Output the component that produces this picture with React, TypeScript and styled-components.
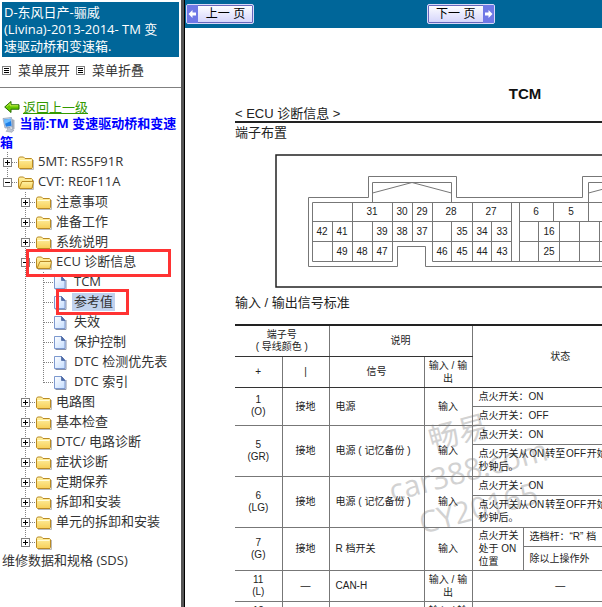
import React from "react";
import styled, { createGlobalStyle, css } from "styled-components";

const blue = "#006699";
const uiFont = `"Open Sans", "Noto Sans CJK SC", sans-serif`;
const docFont = `"Liberation Sans", "Noto Sans CJK SC", sans-serif`;

const GlobalStyle = createGlobalStyle`
  *, *::before, *::after { box-sizing: border-box; }
  body { margin: 0; background: #fff; overflow: hidden; }
  a { color: inherit; text-decoration: none; }
  button { font: inherit; color: inherit; cursor: pointer; }
`;

const Page = styled.div`
  display: grid;
  grid-template-columns: 185px minmax(0, 1fr);
  height: 100vh;
`;

/* ---------- sidebar ---------- */

const Sidebar = styled.nav`
  overflow: hidden;
  border-right: 1px solid #000;
  box-shadow: inset -3px 0 0 #555;
  padding-right: 3px;
  color: #333;
  font: 13px/20px ${uiFont};
`;

const ManualTitle = styled.h1`
  margin: 2px;
  padding: 2px 12px 2px 2px;
  background: ${blue};
  color: #fff;
  font: 13px/17px ${uiFont};
`;

const MenuActions = styled.div`
  display: flex;
  gap: 6px;
  padding: 1px 2px 7px;
  border-bottom: 1px solid #808080;
`;

const MenuAction = styled.button`
  display: flex;
  align-items: center;
  gap: 7px;
  padding: 0;
  border: 0;
  background: none;
  white-space: nowrap;
`;

const Location = styled.div`
  padding-top: 11px;
`;

const BackLink = styled.a`
  display: flex;
  align-items: center;
  gap: 3px;
  height: 15px;
  padding-left: 4px;
  color: #339900;
  span { text-decoration: underline; }
`;

const Current = styled.p`
  margin: 0;
  color: #0000ff;
  font-weight: bold;
  line-height: 19px;
  svg { vertical-align: middle; margin: 0 0 0 2px; }
`;

const Tree = styled.ul`
  margin: 0;
  padding: 0;
  list-style: none;
`;

const TreeRow = styled.li`
  position: relative;
  display: flex;
  height: 20px;
  white-space: nowrap;
`;

const Spacer = styled.span`
  flex: 0 0 18px;
`;

const Toggle = styled.button`
  flex: 0 0 18px;
  height: 20px;
  padding: 0;
  border: 0;
  background: none;
  svg { display: block; }
`;

const Item = styled.a<{ $selected?: boolean }>`
  display: flex;
  svg { flex: none; }
  span {
    height: 18px;
    margin-top: 1px;
    padding: 0 2px;
    line-height: 17px;
    ${(p) => p.$selected && css`background: #c1d2ee;`}
  }
`;

const Callout = styled.i<{ $left: number; $width: number; $height: number }>`
  position: absolute;
  z-index: 1;
  top: -3px;
  left: ${(p) => p.$left}px;
  width: ${(p) => p.$width}px;
  height: ${(p) => p.$height}px;
  border: 3px solid #ff3333;
  pointer-events: none;
`;

const LastLink = styled.a`
  display: block;
  padding-left: 2px;
  line-height: 16px;
`;

/* ---------- main ---------- */

const Main = styled.main`
  overflow: hidden;
  background: #fff;
`;

const PagerBar = styled.div`
  display: grid;
  grid-template-columns: 58% auto;
  justify-items: start;
  height: 28px;
  padding: 4px 0 0 1px;
  background: ${blue};
`;

const PagerButton = styled.button<{ $next?: boolean }>`
  display: flex;
  flex-direction: ${(p) => (p.$next ? "row-reverse" : "row")};
  width: 68px;
  height: 20px;
  padding: 0;
  overflow: hidden;
  border: 1px solid #d8d8f8;
  border-radius: 2px;
  box-shadow: inset 0 0 0 1px #6666bb;
  background: linear-gradient(#fff, #d3d3fb);
  color: #000;
  font: 12px/18px ${docFont};
  svg { flex: none; }
  span { flex: 1; white-space: nowrap; text-align: center; }
`;

const Sheet = styled.article`
  position: relative;
  width: 580px;
  margin: 56px 0 0 50px;
  color: #222;
  font: 10px/12px ${docFont};
`;

const SheetTitle = styled.h2`
  margin: 0;
  color: #111;
  text-align: center;
  font-size: 15px;
  line-height: 20px;
`;

const SectionTitle = styled.h3`
  margin: 0;
  padding-top: 2px;
  border-bottom: 2px solid #222;
  font: 13px/15px ${docFont};
`;

const SubTitle = styled.h4`
  margin: 0 0 11px;
  font: 13px/20px ${docFont};
`;

const Diagram = styled.svg`
  display: block;
  margin: 0 0 5px 40px;
  fill: none;
  stroke: #777;
  text {
    fill: #222;
    stroke: none;
    font: 10px ${docFont};
    text-anchor: middle;
  }
`;

const Signals = styled.table`
  position: relative;
  width: 413px;
  table-layout: fixed;
  border-collapse: collapse;
  border-top: 2px solid #222;
  line-height: 13px;
`;

const Col = styled.col<{ $w: number }>`
  width: ${(p) => p.$w}px;
`;

const Row = styled.tr<{ $h: number }>`
  height: ${(p) => p.$h}px;
`;

const cell = css<{ $left?: boolean }>`
  padding: 0 0 0 ${(p) => (p.$left ? 6 : 0)}px;
  border: 1px solid #777;
  text-align: ${(p) => (p.$left ? "left" : "center")};
  vertical-align: middle;
  font-weight: normal;
  white-space: nowrap;
  &:last-child { border-right: 0; }
`;

const Td = styled.td<{ $left?: boolean }>`${cell}`;
const Th = styled.th<{ $left?: boolean }>`
  ${cell}
  border-bottom-color: #333;
`;
const PinTd = styled(Td)`
  border-left: 0;
  line-height: 12px;
`;
const PinTh = styled(Th)`
  border-left: 0;
  line-height: 12px;
`;

const Watermark = styled.div`
  position: absolute;
  left: 133px;
  top: 327px;
  width: 200px;
  color: #d2d2d2;
  font: 30px/39px ${uiFont};
  text-align: center;
  transform: rotate(-15deg);
  pointer-events: none;
`;

/* ---------- icons ---------- */

const ListIcon = () => (
  <svg width="9" height="9" viewBox="0 0 9 9" aria-hidden="true">
    <rect x=".5" y=".5" width="8" height="8" fill="#fff" stroke="#808080" />
    <path d="M2 2.5h5M2 4.5h5M2 6.5h5" stroke="#000" />
  </svg>
);

const BackIcon = () => (
  <svg width="16" height="14" viewBox="0 0 16 14" aria-hidden="true">
    <path d="M.7 7 7 1.5v3.3h8v4.4H7v3.3z" fill="#66c800" stroke="#246b00" />
    <path d="M2.5 6.7 6.2 3.5v2.3h8" fill="none" stroke="#c8f04c" />
  </svg>
);

const ComputerIcon = () => (
  <svg width="14" height="16" viewBox="0 0 14 16" aria-hidden="true">
    <path d="M10 2l2.5 1v9l-3 1z" fill="#a8b0bc" />
    <path d="M1 1.5 9.5.5l1.2 9L3 11z" fill="#cfd8e6" stroke="#8292ae" strokeWidth=".7" />
    <path d="m2 2.5 6.8-.8.9 7L3.8 9.8z" fill="#1d7fe8" />
    <path d="m2 2.5 6.8-.8.3 2.2L2.6 7z" fill="#6bbcff" />
    <path d="m5 11 3-.6.5 2L12 13l-2 2.3-6-1 1.5-1.5z" fill="#bdc6d4" stroke="#8791a3" strokeWidth=".5" />
  </svg>
);

const FolderIcon = ({ open }: { open?: boolean }) => (
  <svg width="18" height="20" viewBox="0 0 18 20" aria-hidden="true">
    <defs>
      <linearGradient id="folder" x1="0" y1="0" x2="0" y2="1">
        <stop offset="0" stopColor="#fff3a8" />
        <stop offset="1" stopColor="#f7cf58" />
      </linearGradient>
    </defs>
    <path d="M2 17.5h13.5V8" fill="none" stroke="#bbb" />
    <path d="M.5 15.500V6.500l1-1.500h4l1.500 1.500h6.500l1 1v8l-.5 1h-12.500z" fill="url(#folder)" stroke="#b98a24" />
    {open ? (
      <path d="M1 16.500 4 9.500h11.500l-1.500 7z" fill="url(#folder)" stroke="#b98a24" />
    ) : (
      <path d="M1.500 8.500h12" stroke="#fffbd8" />
    )}
  </svg>
);

const PageIcon = () => (
  <svg width="18" height="20" viewBox="0 0 18 20" aria-hidden="true">
    <defs>
      <linearGradient id="sheet" x1="0" y1="0" x2="1" y2="1">
        <stop offset="0" stopColor="#fff" />
        <stop offset="1" stopColor="#c3dcff" />
      </linearGradient>
    </defs>
    <path d="M1.500 17.500h10.500V8" fill="none" stroke="#8b93a8" />
    <path d="M.5 4.500h7l3.500 4v8H.5z" fill="url(#sheet)" stroke="#7c98cf" />
    <path d="M7.500 4.500v4H11z" fill="#4d6dae" stroke="#3d5794" strokeWidth=".6" />
  </svg>
);

type Line = "through" | "down" | "up";

const Branch = ({ line, sign }: { line: Line; sign?: "+" | "-" }) => (
  <svg width="18" height="20" viewBox="0 0 18 20" aria-hidden="true">
    <g stroke="#808080" strokeDasharray="1 1">
      {line !== "down" && <path d="M7.500 0v11" />}
      {line !== "up" && <path d="M7.500 10v10" />}
      <path d="M8 10.500h10" />
    </g>
    {sign && (
      <>
        <rect x="3.500" y="6.500" width="8" height="8" fill="#fff" stroke="#808080" />
        <path d={sign === "+" ? "M5 10.500h5M7.500 8v5" : "M5 10.500h5"} stroke="#000" />
      </>
    )}
  </svg>
);

const Guide = () => (
  <svg width="18" height="20" viewBox="0 0 18 20" aria-hidden="true">
    <path d="M7.500 0v20" stroke="#808080" strokeDasharray="1 1" />
  </svg>
);

const ArrowIcon = ({ next }: { next?: boolean }) => (
  <svg width="11" height="18" viewBox="0 0 11 18" aria-hidden="true">
    <path d="M0 0h11v18H0z" fill="#6f78e6" />
    <path
      d={next ? "M9.500 9 5.500 5v2.500H2v3h3.500V13z" : "M1.500 9l4-4v2.500H9v3H5.500V13z"}
      fill="#fff"
    />
  </svg>
);

/* ---------- tree ---------- */

type Node = {
  label: string;
  level: 1 | 2 | 3;
  line?: Line;
  open?: boolean;
  selected?: boolean;
  callout?: { left: number; width: number; height: number };
};

const nodes: Node[] = [
  { label: "5MT: RS5F91R", level: 1 },
  { label: "CVT: RE0F11A", level: 1, open: true, line: "up" },
  { label: "注意事项", level: 2 },
  { label: "准备工作", level: 2 },
  { label: "系统说明", level: 2 },
  { label: "ECU 诊断信息", level: 2, open: true, callout: { left: 26, width: 145, height: 28 } },
  { label: "TCM", level: 3 },
  { label: "参考值", level: 3, selected: true, callout: { left: 56, width: 73, height: 26 } },
  { label: "失效", level: 3 },
  { label: "保护控制", level: 3 },
  { label: "DTC 检测优先表", level: 3 },
  { label: "DTC 索引", level: 3, line: "up" },
  { label: "电路图", level: 2 },
  { label: "基本检查", level: 2 },
  { label: "DTC/ 电路诊断", level: 2 },
  { label: "症状诊断", level: 2 },
  { label: "定期保养", level: 2 },
  { label: "拆卸和安装", level: 2 },
  { label: "单元的拆卸和安装", level: 2 },
  { label: "", level: 2, line: "up" },
];

const TreeNode = ({ node }: { node: Node }) => {
  const { label, level, line = "through", open, selected, callout } = node;
  return (
    <TreeRow>
      {level > 1 && <Spacer />}
      {level === 3 ? (
        <>
          <Guide />
          <Branch line={line} />
        </>
      ) : (
        <Toggle aria-label={open ? "折叠" : "展开"} aria-expanded={!!open}>
          <Branch line={line} sign={open ? "-" : "+"} />
        </Toggle>
      )}
      <Item href="#" $selected={selected} aria-label={label || "维修数据和规格"}>
        {level === 3 ? <PageIcon /> : <FolderIcon open={open} />}
        {label && <span>{label}</span>}
      </Item>
      {callout && <Callout $left={callout.left} $width={callout.width} $height={callout.height} />}
    </TreeRow>
  );
};

/* ---------- connector diagram ---------- */

const pins: [number, number, string][] = [
  [97, 61, "31"], [127, 61, "30"], [147, 61, "29"], [176, 61, "28"], [216, 61, "27"], [261, 61, "6"], [296, 61, "5"],
  [47, 81, "42"], [67, 81, "41"], [107, 81, "39"], [127, 81, "38"], [147, 81, "37"],
  [187, 81, "35"], [207, 81, "34"], [227, 81, "33"], [274, 81, "16"],
  [67, 101, "49"], [87, 101, "48"], [107, 101, "47"], [167, 101, "46"],
  [187, 101, "45"], [207, 101, "44"], [227, 101, "43"], [274, 101, "25"],
];

const Connector = () => (
  <Diagram width="500" height="134" viewBox="0 0 500 134" role="img" aria-label="TCM 端子布置图">
    <rect x="1" y="1" width="498" height="132" stroke="#222" strokeWidth="1.500" />
    <path d="M500 22.500H307.500v21H181.500v-21H93.500v21H33.500v69h89v-20h28v20H500" />
    <path d="M500 48.500H37.500v59h80v-59M500 107.500H157.500v-59M37.500 67.500h199M37.500 87.500h199M244.500 67.500H500M244.500 87.500H500" />
    <path d="M57.500 67.500v40M77.500 48.500v59M97.500 67.500v40M137.500 48.500v39M176.500 67.500v40M197.500 48.500v59M216.500 67.500v40M236.500 48.500v59M244.500 48.500v59M263.500 67.500v40M284.500 67.500v40M304.500 67.500v40M324.500 67.500v40M278.500 48.500v19" />
    <path d="M97.500 48.500v-20h79v20M97.500 39 137 28.500 176.500 39M500 28.500H313.500v39M313.500 39 353 28.500" />
    {pins.map(([x, y, n]) => (
      <text key={n} x={x} y={y}>{n}</text>
    ))}
  </Diagram>
);

const InOut = () => (
  <>
    输入 / 输
    <br />出
  </>
);

const Pin = ({ n, wire, span }: { n: string; wire: string; span?: number }) => (
  <PinTd rowSpan={span}>
    {n}
    <br />({wire})
  </PinTd>
);

const memoryRows = [
  { n: "5", wire: "GR" },
  { n: "6", wire: "LG" },
];

/* Hair spaces separate the Latin words from the Chinese text. */
const switchedOff = "点火开关从\u200aON\u200a转至\u200aOFF\u200a开始";

export default function App() {
  return (
    <>
      <GlobalStyle />
      <Page>
        <Sidebar>
          <ManualTitle>D-东风日产-骊威 (Livina)-2013-2014- TM 变速驱动桥和变速箱.</ManualTitle>
          <MenuActions>
            <MenuAction><ListIcon />菜单展开</MenuAction>
            <MenuAction><ListIcon />菜单折叠</MenuAction>
          </MenuActions>
          <Location>
            <BackLink href="#"><BackIcon /><span>返回上一级</span></BackLink>
            <Current><ComputerIcon /> 当前:TM 变速驱动桥和变速箱</Current>
          </Location>
          <Tree>
            {nodes.map((node, i) => <TreeNode key={i} node={node} />)}
          </Tree>
          <LastLink href="#">维修数据和规格 (SDS)</LastLink>
        </Sidebar>
        <Main>
          <PagerBar>
            <PagerButton><ArrowIcon /><span>上一 页</span></PagerButton>
            <PagerButton $next><ArrowIcon next /><span>下一 页</span></PagerButton>
          </PagerBar>
          <Sheet>
            <Watermark>畅易<br />car388.com<br />CY20165</Watermark>
            <SheetTitle>TCM</SheetTitle>
            <SectionTitle>&lt; ECU 诊断信息 &gt;</SectionTitle>
            <SubTitle>端子布置</SubTitle>
            <Connector />
            <SubTitle>输入 / 输出信号标准</SubTitle>
            <Signals>
              <colgroup>
                <Col $w={47} /><Col $w={47} /><Col $w={95} /><Col $w={48} /><Col $w={51} /><Col $w={125} />
              </colgroup>
              <thead>
                <Row $h={31}>
                  <PinTh colSpan={2}>端子号<br />( 导线颜色 )</PinTh>
                  <Th colSpan={2}>说明</Th>
                  <Th colSpan={2} rowSpan={2}>状态</Th>
                </Row>
                <Row $h={31}>
                  <PinTh>+</PinTh>
                  <Th>|</Th>
                  <Th>信号</Th>
                  <Th><InOut /></Th>
                </Row>
              </thead>
              <tbody>
                <Row $h={19}>
                  <Pin n="1" wire="O" span={2} />
                  <Td rowSpan={2}>接地</Td>
                  <Td rowSpan={2} $left>电源</Td>
                  <Td rowSpan={2}>输入</Td>
                  <Td colSpan={2} $left>点火开关：ON</Td>
                </Row>
                <Row $h={19}>
                  <Td colSpan={2} $left>点火开关：OFF</Td>
                </Row>
                {memoryRows.map(({ n, wire }) => (
                  <React.Fragment key={n}>
                    <Row $h={19}>
                      <Pin n={n} wire={wire} span={2} />
                      <Td rowSpan={2}>接地</Td>
                      <Td rowSpan={2} $left>电源 ( 记忆备份 )</Td>
                      <Td rowSpan={2}>输入</Td>
                      <Td colSpan={2} $left>点火开关：ON</Td>
                    </Row>
                    <Row $h={32}>
                      <Td colSpan={2} $left>{switchedOff}<br />秒钟后。</Td>
                    </Row>
                  </React.Fragment>
                ))}
                <Row $h={19}>
                  <Pin n="7" wire="G" span={2} />
                  <Td rowSpan={2}>接地</Td>
                  <Td rowSpan={2} $left>R 档开关</Td>
                  <Td rowSpan={2}>输入</Td>
                  <Td rowSpan={2} $left>点火开关<br />处于 ON<br />位置</Td>
                  <Td $left>选档杆：“R” 档</Td>
                </Row>
                <Row $h={24}>
                  <Td $left>除以上操作外</Td>
                </Row>
                <Row $h={31}>
                  <Pin n="11" wire="L" />
                  <Td>—</Td>
                  <Td $left>CAN-H</Td>
                  <Td><InOut /></Td>
                  <Td colSpan={2}>—</Td>
                </Row>
                <Row $h={31}>
                  <Pin n="12" wire="P" />
                  <Td>—</Td>
                  <Td $left>CAN-L</Td>
                  <Td><InOut /></Td>
                  <Td colSpan={2}>—</Td>
                </Row>
              </tbody>
            </Signals>
          </Sheet>
        </Main>
      </Page>
    </>
  );
}
